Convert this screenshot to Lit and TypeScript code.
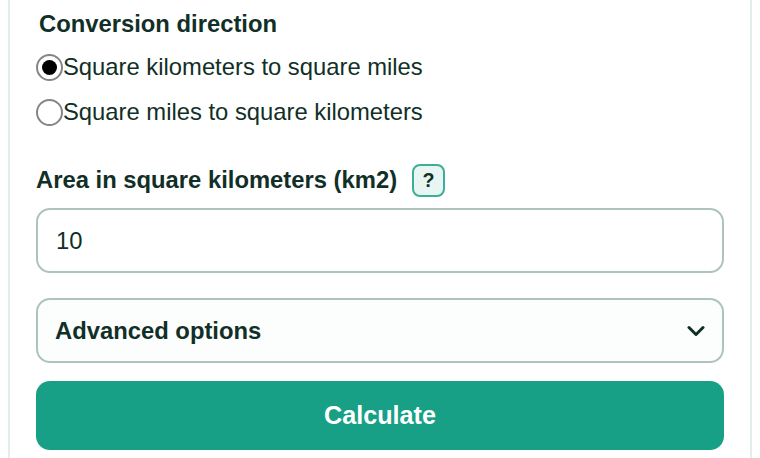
import { LitElement, html, css } from "lit";
import { customElement } from "lit/decorators.js";

@customElement("app-root")
export class AppRoot extends LitElement {
  static styles = css`
    :host { display: block; width: 760px; height: 458px; overflow: hidden; background: #fff; font-family: "Liberation Sans", Arial, sans-serif; color: #112f27; }
    .card { box-sizing: border-box; margin: 0 8px; height: 458px; border: solid #e3edea; border-width: 0 2px; background: #fff; padding: 10px 26px 0 26px; }
    .legend { font-size: 23.8px; font-weight: 700; line-height: 28px; margin-left: 3px; }
    .radio { display: flex; align-items: center; height: 30px; font-size: 23.8px; }
    .radios { display: flex; flex-direction: column; gap: 15px; margin-top: 14px; }
    .dot { box-sizing: border-box; width: 27px; height: 27px; border-radius: 50%; border: 2px solid #858585; display: flex; align-items: center; justify-content: center; background: #fff; }
    .dot i { width: 15px; height: 15px; border-radius: 50%; background: #000; }
    .label { display: flex; align-items: center; gap: 15px; margin-top: 36px; font-size: 23.8px; font-weight: 700; height: 34px; }
    .help { box-sizing: border-box; width: 33px; height: 33px; margin-top: 1px; border-radius: 8px; border: 2px solid #3dae97; background: #e8f6f3; display: flex; align-items: center; justify-content: center; font-size: 19.6px; font-weight: 700; }
    .field { box-sizing: border-box; height: 65px; border: 2px solid #aec3bd; border-radius: 14px; display: flex; align-items: center; justify-content: space-between; padding: 0 18px; font-size: 23.8px; background: #fff; }
    .input { margin-top: 11px; }
    .adv { margin-top: 25px; padding: 0 17px; font-weight: 700; background: #fcfdfd; }
    .btn { margin-top: 18px; height: 69px; border-radius: 14px; background: #17a085; color: #fff; display: flex; align-items: center; justify-content: center; font-size: 25.2px; font-weight: 700; }
  `;
  render() {
    return html`<div class="card">
      <div class="legend">Conversion direction</div>
      <div class="radios">
        <div class="radio"><span class="dot"><i></i></span>Square kilometers to square miles</div>
        <div class="radio"><span class="dot"></span>Square miles to square kilometers</div>
      </div>
      <div class="label">Area in square kilometers (km2) <span class="help">?</span></div>
      <div class="field input">10</div>
      <div class="field adv">Advanced options
        <svg width="18" height="12" viewBox="0 0 18 12" fill="none" stroke="#112f27" stroke-width="3" stroke-linecap="round" stroke-linejoin="round"><path d="M2 2.5l7 7 7-7"/></svg>
      </div>
      <div class="btn">Calculate</div>
    </div>`;
  }
}
